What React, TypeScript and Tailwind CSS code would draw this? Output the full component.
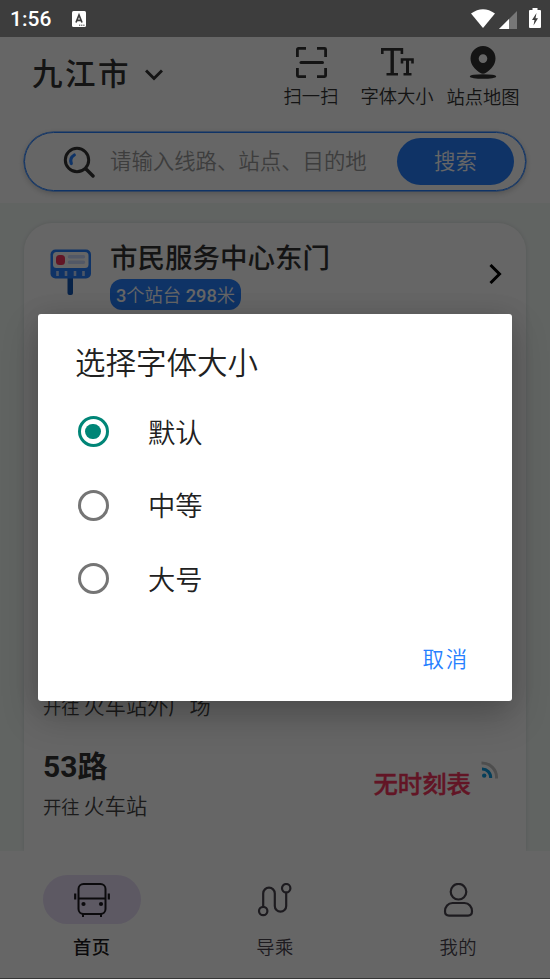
import type { ReactNode } from 'react';

const ScanIcon = () => (
  <svg width="31" height="31" viewBox="0 0 31 31" fill="none" stroke="#333" strokeWidth="2.800">
    <path d="M1.400 10V2.400a1 1 0 0 1 1-1H10M21 1.400h7.600a1 1 0 0 1 1 1V10M29.600 21v7.600a1 1 0 0 1-1 1H21M10 29.600H2.400a1 1 0 0 1-1-1V21" />
    <path d="M5 15.500h21.500" strokeWidth="3" strokeLinecap="round" />
  </svg>
);

const FontIcon = () => (
  <svg width="33" height="28" viewBox="0 0 33 28" fill="none" stroke="#333" strokeWidth="2.600">
    <path d="M1.300 6V1.400h19.600V6M5.500 26.300h11.500" />
    <path d="M11.200 1.400v25" strokeWidth="3.400" />
    <path d="M21 15.500v-4h10.500v4M22.500 26.300h8" />
    <path d="M26.500 11.500v15" strokeWidth="3" />
  </svg>
);

const PinIcon = () => (
  <svg width="28" height="34" viewBox="0 0 28 34" fill="#333">
    <path
      fillRule="evenodd"
      d="M14 0C21 0 26.500 5.600 26.500 12.400c0 6.500-4.600 11-9.500 14.300-1.900 1.300-4.100 1.300-6 0C6.100 23.400 1.500 18.900 1.500 12.400 1.500 5.600 7 0 14 0Zm0 8.300a4.300 4.300 0 1 0 0 8.600 4.300 4.300 0 0 0 0-8.600Z"
    />
    <ellipse cx="14" cy="30.500" rx="13.200" ry="2.300" />
  </svg>
);

const BusIcon = () => (
  <svg width="36" height="34" viewBox="0 0 36 34" fill="none" stroke="#1d1b20" strokeWidth="2">
    <rect x="4.500" y="1" width="27" height="30" rx="5" />
    <path d="M4.500 15.500h27M9 31v3M27 31v3" />
    <path d="M1.200 10.500v6M34.800 10.500v6" strokeWidth="2.200" />
    <circle cx="9.500" cy="21" r="2.100" fill="#1d1b20" stroke="none" />
    <circle cx="27" cy="21" r="2.100" fill="#1d1b20" stroke="none" />
  </svg>
);

const RouteIcon = () => (
  <svg width="36" height="34" viewBox="0 0 36 34" fill="none" stroke="#49454f" strokeWidth="2.200">
    <circle cx="6.200" cy="28" r="4.200" />
    <circle cx="29.200" cy="5.200" r="4.200" />
    <path d="M6.200 23.500V10.500a5.800 5.800 0 0 1 11.600 0V23a5.700 5.700 0 0 0 11.400 0V9.500" />
  </svg>
);

const UserIcon = () => (
  <svg width="36" height="34" viewBox="0 0 36 34" fill="none" stroke="#49454f" strokeWidth="2.200">
    <circle cx="18.500" cy="8.700" r="7.800" />
    <path d="M12.500 20h12c4.500 0 7.500 4 7.500 8.300 0 2.500-1.500 4.300-4 4.300H9c-2.500 0-4-1.800-4-4.300C5 24 8 20 12.500 20Z" />
  </svg>
);

const StationIcon = () => (
  <svg width="42" height="46" viewBox="0 0 42 46">
    <rect x="17.500" y="26" width="5.500" height="20" rx="2" fill="#1557b5" />
    <rect x="0.500" y="0.500" width="40.500" height="29" rx="5" fill="#2680ff" />
    <rect x="3" y="3" width="35.500" height="16" rx="3.500" fill="#fff" />
    <rect x="6" y="6" width="9" height="10" rx="3.500" fill="#f5365c" />
    <path d="M19.500 7.800h14M19.500 13.200h14" stroke="#cddcff" strokeWidth="3.500" strokeLinecap="round" />
    <path d="M7.500 22v5M16 22v5M25 22v5M33.500 22v5" stroke="#bfd6ff" strokeWidth="2.600" />
  </svg>
);

const SignalIcon = () => (
  <svg width="18" height="18" viewBox="0 0 18 18" fill="none" strokeWidth="3">
    <path d="M0.500 2A14.500 14.500 0 0 1 15.500 17.500" stroke="#c4c4c4" />
    <path d="M1 8a8.500 8.500 0 0 1 8.700 9" stroke="#0d9be0" />
    <circle cx="3.200" cy="14.600" r="2.200" fill="#0d9be0" />
  </svg>
);

function StatusBar() {
  return (
    <div className="relative z-20 flex h-[37px] items-center bg-[#3d3d3d] pl-[10px] pr-[9px] font-['Roboto',sans-serif] text-white">
      <span className="w-[62px] pt-px text-[21px] font-medium leading-none">1:56</span>
      <svg width="14" height="16" viewBox="0 0 14 16">
        <rect width="14" height="16" rx="1.500" fill="#fff" />
        <path d="M4 11.500 7 4l3 7.500M5 9.300h4" fill="none" stroke="#3d3d3d" strokeWidth="1.700" />
        <path d="M7 14.200h6" stroke="#3d3d3d" strokeWidth="1" strokeDasharray="1.300 0.800" />
      </svg>
      <div className="ml-auto flex items-center">
        <svg width="24" height="19" viewBox="0 0 24 19" fill="#fff">
          <path d="M0 4.500Q12-4 24 4.500L12 19Z" />
        </svg>
        <svg width="18" height="18" viewBox="0 0 18 18" className="ml-1 mt-0.5">
          <path d="M0 18 18 0v18Z" fill="#777" />
          <path d="M0 18 10 8v10Z" fill="#fff" />
        </svg>
        <svg width="12" height="20" viewBox="0 0 12 20" className="-mt-0.5 ml-3">
          <path d="M3.500 0h5v2H11a1 1 0 0 1 1 1v16a1 1 0 0 1-1 1H1a1 1 0 0 1-1-1V3a1 1 0 0 1 1-1h2.500Z" fill="#fff" />
          <path d="M7.500 5 3 12h2.500L4.500 17.500 9 10.300H6.500Z" fill="#3d3d3d" />
        </svg>
      </div>
    </div>
  );
}

function Shortcut({ icon, label, className }: { icon: ReactNode; label: string; className: string }) {
  return (
    <div className={`flex flex-col items-center ${className}`}>
      <div className="flex h-9 items-center">{icon}</div>
      <span className="mt-[5px] whitespace-nowrap text-[18.300px] font-[350] leading-6">{label}</span>
    </div>
  );
}

function Header() {
  return (
    <header className="h-[166px] bg-white px-6 text-[#333]">
      <div className="flex h-[95px] items-start">
        <div className="flex items-center pl-2 pt-4">
          <span className="text-[30.500px] font-medium leading-[44px] tracking-[2.500px]">九江市</span>
          <svg width="18" height="12" viewBox="0 0 18 12" fill="none" stroke="#333" strokeWidth="3" className="ml-[14px]">
            <path d="m1 1.500 8 8 8-8" />
          </svg>
        </div>
        <div className="ml-auto flex pr-[6px]">
          <Shortcut icon={<ScanIcon />} label="扫一扫" className="w-[56px] pt-[7px]" />
          <Shortcut icon={<FontIcon />} label="字体大小" className="ml-[21px] w-[74px] pt-[7px]" />
          <Shortcut icon={<PinIcon />} label="站点地图" className="ml-[12px] w-[74px] pt-[8px]" />
        </div>
      </div>
      <div className="flex h-[59px] items-center rounded-full border border-[#2680ff] pl-[38px] pr-[11px] shadow-[0_0_0_0.500px_#2680ff,0_2px_6px_rgba(0,0,0,0.22)]">
        <svg width="32" height="32" viewBox="0 0 32 32" fill="none" strokeLinecap="round">
          <circle cx="14" cy="14" r="11.700" stroke="#333" strokeWidth="3" />
          <path d="m23 23 7 7" stroke="#333" strokeWidth="3.400" />
          <path d="M11.300 9c-3.300 2-4.300 5-3 8.500" stroke="#2680ff" strokeWidth="3.200" />
        </svg>
        <span className="ml-[15px] pt-[2px] text-[21.400px] font-[350] text-[#999]">请输入线路、站点、目的地</span>
        <button className="ml-auto h-[47px] w-[117px] rounded-full bg-[#2680ff] pt-px text-[21.400px] font-[350] text-white">
          搜索
        </button>
      </div>
    </header>
  );
}

function Destination({ name }: { name: string }) {
  return (
    <div className="flex items-baseline gap-1 font-[350] leading-8 text-[#444]">
      <span className="text-[18.300px]">开往</span>
      <span className="text-[21.200px]">{name}</span>
    </div>
  );
}

function StationCard() {
  return (
    <main className="h-[648px] bg-[#f3f9f6] px-6 pt-5">
      <section className="h-[628px] rounded-t-[28px] bg-white px-[19px] shadow-[0_0_4px_rgba(0,0,0,0.12)]">
        <div className="flex h-[92px] pl-[7px] pt-[26px]">
          <StationIcon />
          <div className="-mt-[9px] ml-[18px]">
            <h2 className="text-[27.500px] font-medium leading-[38px] text-[#333]">市民服务中心东门</h2>
            <span className="mt-px flex h-[31px] w-[131px] items-center justify-center whitespace-pre rounded-xl bg-[#2680ff] pt-[2px] text-[18.300px] font-[350] text-white">
              <b className="font-medium">3</b>个站台 <b className="font-medium">298</b>米
            </span>
          </div>
          <svg width="13" height="20" viewBox="0 0 13 20" fill="none" stroke="#000" strokeWidth="3" className="ml-auto mr-[5px] mt-[15px]">
            <path d="m1.500 1 9 9-9 9" />
          </svg>
        </div>
        <div className="pt-[376px]">
          <Destination name="火车站外广场" />
        </div>
        <div className="flex justify-between pt-[23px]">
          <div>
            <h3 className="text-[30px] font-bold leading-10 text-[#333]">53路</h3>
            <div className="pt-1">
              <Destination name="火车站" />
            </div>
          </div>
          <div className="flex items-start pr-[8px] pt-[14px]">
            <span className="pt-[2px] text-[24.400px] font-medium leading-[44px] text-[#f5365c] [-webkit-text-stroke:0.400px_#f5365c]">
              无时刻表
            </span>
            <span className="ml-[10px]">
              <SignalIcon />
            </span>
          </div>
        </div>
      </section>
    </main>
  );
}

const tabs = [
  { label: '首页', icon: <BusIcon />, active: true },
  { label: '导乘', icon: <RouteIcon />, active: false },
  { label: '我的', icon: <UserIcon />, active: false },
];

function TabBar() {
  return (
    <nav className="relative grid h-[128px] grid-cols-3 border-b border-[#888] bg-white pt-6">
      {tabs.map((tab) => (
        <div key={tab.label} className="flex flex-col items-center">
          <div className={`flex h-[49px] w-[98px] items-center justify-center rounded-full ${tab.active ? 'bg-[#e8def8]' : ''}`}>
            {tab.icon}
          </div>
          <span
            className={`mt-3 text-[18.300px] leading-6 tracking-[0.500px] ${
              tab.active ? 'font-medium text-[#1d1b20]' : 'font-[350] text-[#49454f]'
            }`}
          >
            {tab.label}
          </span>
        </div>
      ))}
    </nav>
  );
}

const options = ['默认', '中等', '大号'];

function FontSizeDialog() {
  return (
    <div className="absolute inset-0 z-10 bg-black/60 px-[38px] pt-[314px]">
      <div
        role="dialog"
        className="flex h-[387px] flex-col rounded-[3px] bg-white pt-[27px] text-[#212121] shadow-[0_16px_36px_rgba(0,0,0,0.22),0_0_24px_rgba(0,0,0,0.1)]"
      >
        <h1 className="pl-[37px] text-[30.500px] font-[350] leading-[46px]">选择字体大小</h1>
        <div className="mt-2">
          {options.map((option, i) => (
            <div key={option} className="flex h-[73.400px] items-center pl-[39.500px]">
              <span
                className={`flex size-[31px] items-center justify-center rounded-full border-3 ${
                  i === 0 ? 'border-[#008577]' : 'border-[#757575]'
                }`}
              >
                {i === 0 && <span className="size-[15.500px] rounded-full bg-[#008577]" />}
              </span>
              <span className="ml-[39.500px] pt-[5px] text-[27.300px] font-[350]">{option}</span>
            </div>
          ))}
        </div>
        <button className="ml-auto mr-[43px] mt-[29px] text-[21.400px] font-[350] tracking-[1.900px] text-[#2680ff]">取消</button>
      </div>
    </div>
  );
}

export default function App() {
  return (
    <div className="relative h-[979px] w-[550px] overflow-hidden bg-white font-['Roboto','Noto_Sans_CJK_SC',sans-serif]">
      <StatusBar />
      <Header />
      <StationCard />
      <TabBar />
      <FontSizeDialog />
    </div>
  );
}
